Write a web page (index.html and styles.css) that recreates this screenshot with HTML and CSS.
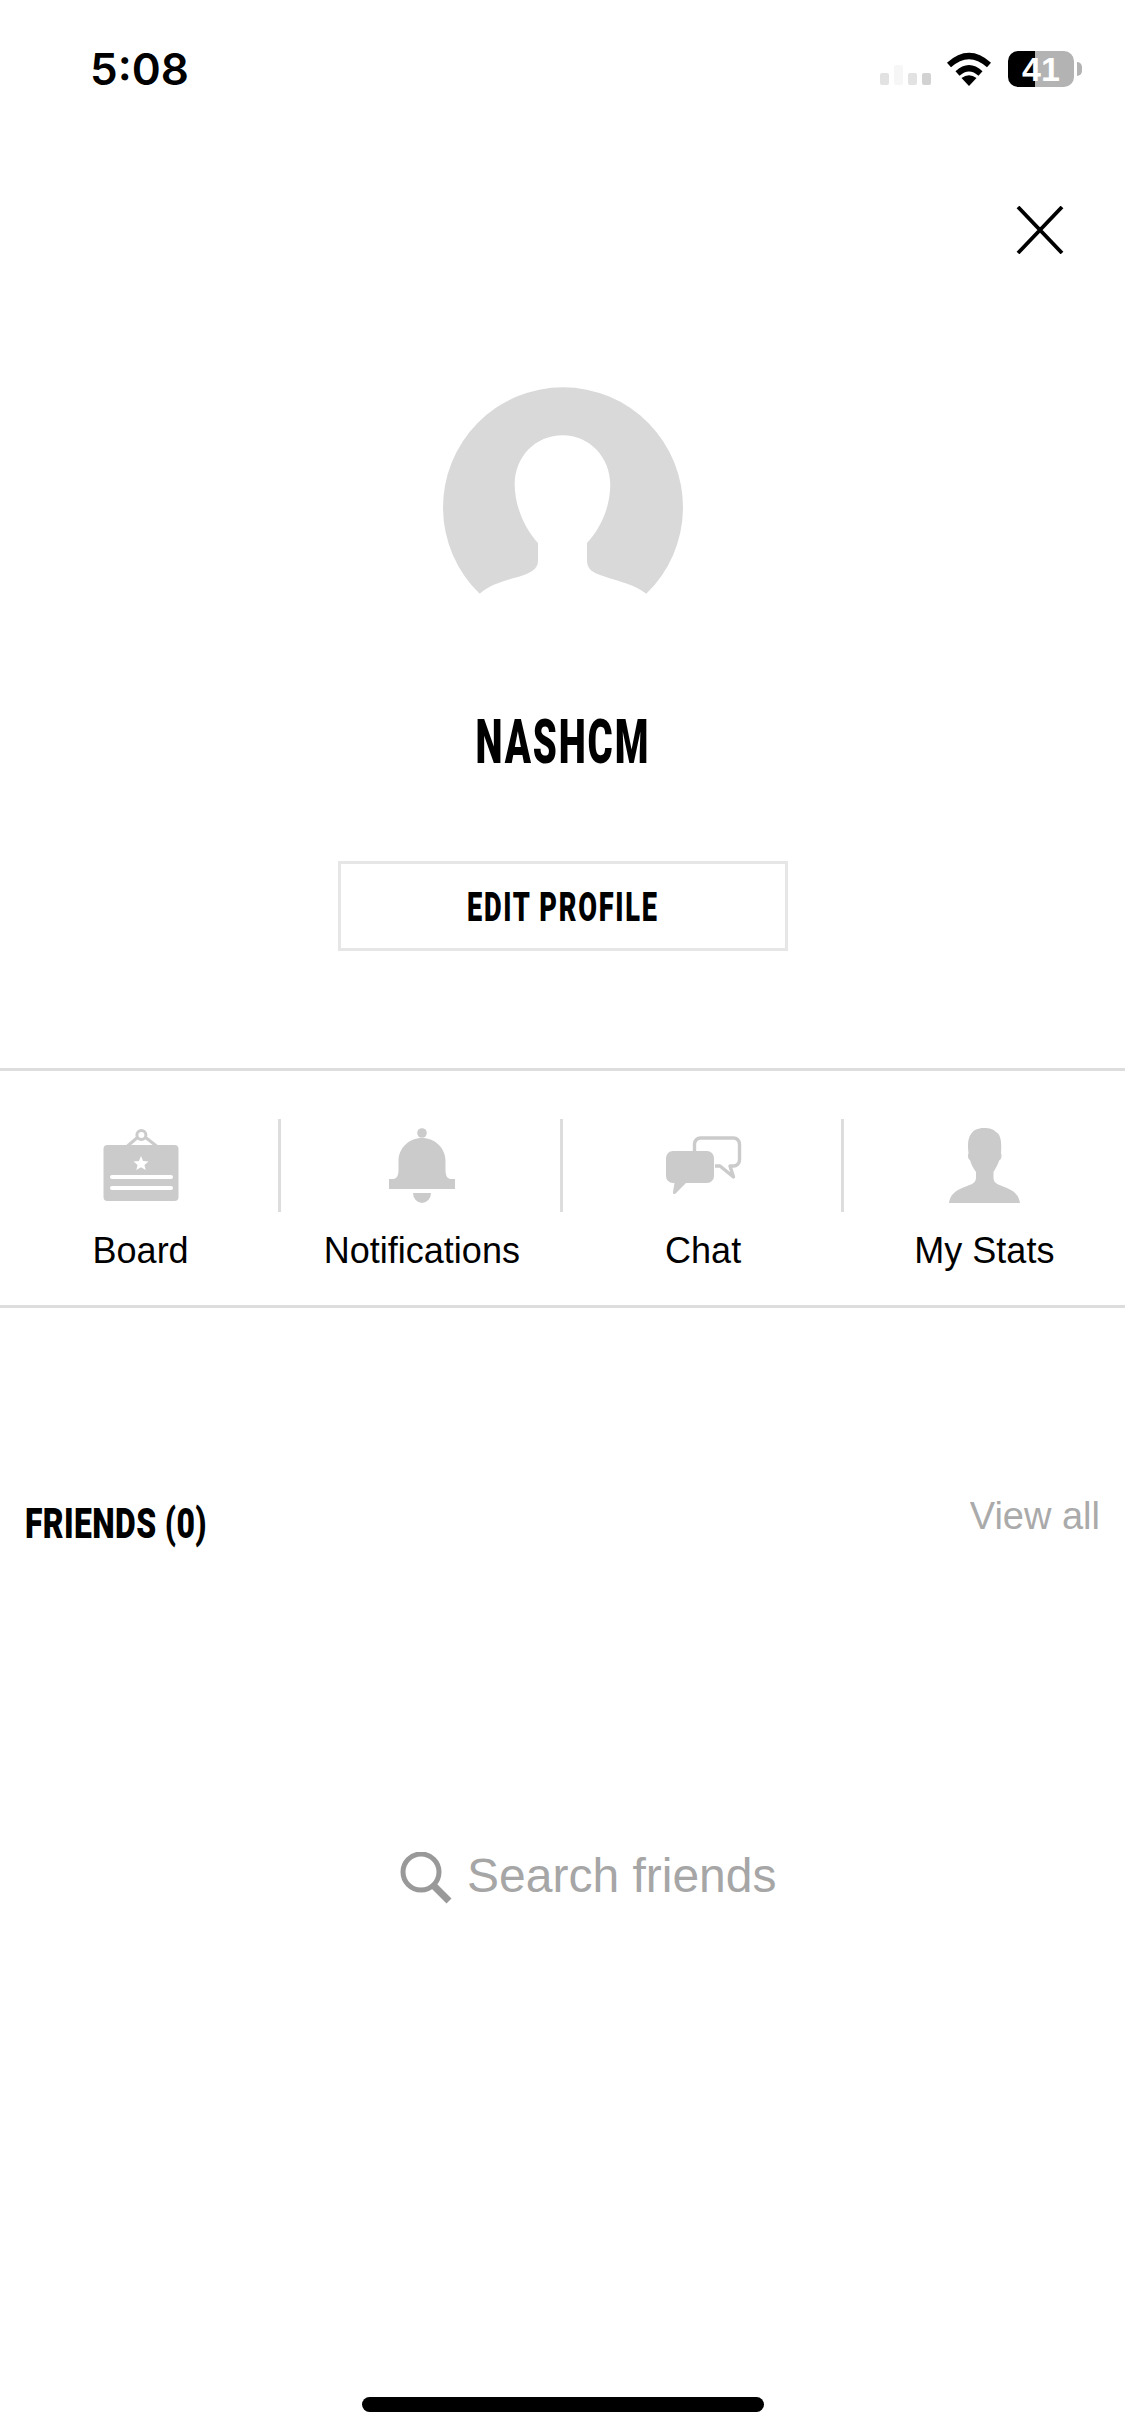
FILE: index.html
```html
<!DOCTYPE html>
<html lang="en">

<head>
    <meta charset="UTF-8">
    <title>Profile</title>
    <link rel="stylesheet" href="styles.css">
</head>

<body>
    <div class="page">
        <div class="status-bar">
            <span class="time">5:08</span>
            <div class="status-icons">
                <div class="signal">
                    <span class="bar"></span>
                    <span class="bar faint"></span>
                    <span class="bar"></span>
                    <span class="bar dark"></span>
                </div>
                <svg class="wifi" viewBox="0 0 46 34" width="46" height="34">
                    <path d="M3 13 Q23 -5 43 13" fill="none" stroke="#000" stroke-width="6" />
                    <path d="M11.5 21.5 Q23 11 34.5 21.5" fill="none" stroke="#000" stroke-width="6" />
                    <path d="M23 34 L15.5 26 Q23 20.5 30.5 26 Z" fill="#000" />
                </svg>
                <div class="battery">41</div>
                <span class="battery-nub"></span>
            </div>
        </div>

        <svg class="close" viewBox="0 0 48 48" width="48" height="48">
            <path d="M2 1 L46 47 M46 1 L2 47" stroke="#000" stroke-width="3.8" fill="none" />
        </svg>

        <svg class="avatar" viewBox="0 0 240 207" width="240" height="207">
            <path fill="#d9d9d9" d="M36.7 206.7 A120 120 0 1 1 203.3 206.7 C192 198 178 195 160 189 C150 186 144 182 144 174 V156 C158 141 167 120 167.3 98 C167.3 70 146 48.3 120 48.3 C92 48.3 71.7 70 71.7 98 C72 120 82 142 95 156 V174 C95 182 88 186 75 190 C60 194 46 198 36.7 206.7 Z" />
        </svg>

        <h1 class="name"><span>NASHCM</span></h1>
        <div class="edit-btn"><span>EDIT PROFILE</span></div>

        <div class="menu">
            <div class="menu-item">
                <div class="menu-icon">
                    <svg viewBox="0 0 80 76" width="80" height="76">
                        <path d="M26.5 18 L37 9 M44 9 L55.5 18" stroke="#cbcbcb" stroke-width="3" fill="none" />
                        <circle cx="40.4" cy="7" r="4.5" stroke="#cbcbcb" stroke-width="3" fill="none" />
                        <rect x="2.5" y="17" width="75" height="56" rx="4" fill="#cbcbcb" />
                        <path d="M40 28 L42.1 33 L47.5 33.4 L43.4 36.9 L44.7 42 L40 39.3 L35.3 42 L36.6 36.9 L32.5 33.4 L37.9 33 Z" fill="#fff" />
                        <path d="M11 49 H70 M11 60 H70" stroke="#fff" stroke-width="4" stroke-linecap="round" />
                    </svg>
                </div>
                <span class="menu-label">Board</span>
            </div>
            <div class="menu-item">
                <div class="menu-icon">
                    <svg viewBox="0 0 80 76" width="80" height="76">
                        <circle cx="40" cy="5" r="4.8" fill="#cbcbcb" />
                        <path d="M7 51 H11 C15 51 16.5 47 16.5 42 V33 C16.5 20 27 10 40 10 C53 10 63.5 20 63.5 33 V42 C63.5 47 65 51 69 51 H73 V61 H7 Z" fill="#cbcbcb" />
                        <path d="M31 65 H49 A9 10 0 0 1 31 65 Z" fill="#cbcbcb" />
                    </svg>
                </div>
                <span class="menu-label">Notifications</span>
            </div>
            <div class="menu-item">
                <div class="menu-icon">
                    <svg viewBox="0 0 80 76" width="80" height="76">
                        <path d="M31.5 23 V16 a6 6 0 0 1 6 -6 H70.5 a6 6 0 0 1 6 6 V32 a6 6 0 0 1 -6 6 H67 L70.5 49 L57 38 H52" fill="none" stroke="#cbcbcb" stroke-width="3.4" stroke-linejoin="round" />
                        <path d="M10 23 H44 a7 7 0 0 1 7 7 V48 a7 7 0 0 1 -7 7 H23 L12 66 Q9.5 66.5 10 64 L11.5 55 H10 a7 7 0 0 1 -7 -7 V30 a7 7 0 0 1 7 -7 Z" fill="#cbcbcb" />
                    </svg>
                </div>
                <span class="menu-label">Chat</span>
            </div>
            <div class="menu-item">
                <div class="menu-icon">
                    <svg viewBox="0 0 80 76" width="80" height="76">
                        <path d="M5 75 C6 67 11 63 18 60 C25 57 32 56 32 50 V44 C29 40 27 36 26 32 C24 31 23.5 28 24.5 25 C23 14 24 0 40 0 C46 0 49 1 52 4 C56 6 58 12 57 25 C58 28 57.5 31 55.5 32 C54 36 52 40 49.5 44 V50 C49.5 56 56 57 63 60 C70 63 75 67 76 75 Z" fill="#cbcbcb" />
                    </svg>
                </div>
                <span class="menu-label">My Stats</span>
            </div>
        </div>

        <div class="friends-head">
            <h2 class="friends-title">FRIENDS (0)</h2>
            <span class="view-all">View all</span>
        </div>

        <div class="search">
            <svg viewBox="0 0 52 52" width="52" height="52">
                <circle cx="21" cy="20" r="18" fill="none" stroke="#999" stroke-width="5" />
                <path d="M33 33 L49 49" stroke="#999" stroke-width="7" fill="none" />
            </svg>
            <span class="search-text">Search friends</span>
        </div>

        <div class="home-indicator"></div>
    </div>
</body>

</html>
```

FILE: styles.css
```css
* {
    box-sizing: border-box;
}

body {
    margin: 0;
    background: #fff;
    color: #000;
    font-family: 'Liberation Sans', Arial, sans-serif;
}

.page {
    width: 1125px;
    height: 2436px;
    display: flex;
    flex-direction: column;
    overflow: hidden;
}

.status-bar {
    height: 100px;
    padding: 46px 43px 0 90px;
    display: flex;
    justify-content: space-between;
    align-items: flex-start;
}

.time {
    font-family: Inter, sans-serif;
    font-weight: 600;
    font-size: 44px;
    line-height: 46px;
}

.status-icons {
    display: flex;
    align-items: flex-start;
    padding-top: 5px;
}

.signal {
    display: flex;
    align-items: flex-end;
    gap: 5px;
    height: 34px;
    margin-right: 15px;
}

.bar {
    width: 9px;
    height: 12px;
    border-radius: 2px;
    background: #e2e2e2;
}

.bar.faint {
    height: 20px;
    background: #f6f6f6;
}

.bar.dark {
    background: #d2d2d2;
}

.wifi {
    margin: 1px 16px 0 0;
}

.battery {
    width: 66px;
    height: 36px;
    border-radius: 10px;
    background: linear-gradient(to right, #000 27px, #b3b3b3 27px);
    color: #fff;
    font-weight: 700;
    font-size: 34px;
    line-height: 36px;
    text-align: center;
}

.battery-nub {
    width: 5px;
    height: 14px;
    margin: 11px 0 0 3px;
    border-radius: 0 5px 5px 0;
    background: #b3b3b3;
}

.close {
    align-self: flex-end;
    margin: 106px 61px 0 0;
}

.avatar {
    align-self: center;
    margin-top: 133px;
}

/* no condensed face is installed, so the headings are squeezed */
.name {
    margin: 118px 0 0;
    font-family: Roboto, 'Liberation Sans', sans-serif;
    font-size: 62px;
    font-weight: 900;
    line-height: 60px;
    text-align: center;
}

.name span {
    display: inline-block;
    transform: scaleX(0.62);
    letter-spacing: 3px;
}

.edit-btn {
    width: 450px;
    height: 90px;
    margin: 89px auto 0;
    padding-top: 2px;
    border: 3px solid #e6e6e6;
    display: flex;
    align-items: center;
    justify-content: center;
    font-family: Roboto, 'Liberation Sans', sans-serif;
    font-size: 40px;
    font-weight: 900;
}

.edit-btn span {
    transform: scaleX(0.68);
    letter-spacing: 2.5px;
    white-space: nowrap;
}

.menu {
    height: 240px;
    margin-top: 117px;
    padding-top: 48px;
    border-top: 3px solid #ddd;
    border-bottom: 3px solid #ddd;
    display: grid;
    grid-template-columns: repeat(4, 1fr);
}

.menu-item {
    display: flex;
    flex-direction: column;
    align-items: stretch;
}

.menu-icon {
    height: 93px;
    padding: 9px 0 0 3px;
    border-right: 3px solid #ddd;
    display: flex;
    justify-content: center;
}

.menu-item:last-child .menu-icon {
    border-right: none;
    padding-left: 0;
}

.menu-label {
    margin-top: 18px;
    font-size: 36px;
    line-height: 42px;
    text-align: center;
}

.friends-head {
    margin-top: 181px;
    padding: 0 25px;
    display: flex;
    justify-content: space-between;
    align-items: flex-start;
}

.friends-title {
    margin: 11px 0 0;
    font-family: Roboto, 'Liberation Sans', sans-serif;
    font-size: 42px;
    font-weight: 900;
    line-height: 48px;
    letter-spacing: 0.5px;
    transform: scaleX(0.76);
    transform-origin: left center;
    white-space: nowrap;
}

.view-all {
    margin-top: 3px;
    font-size: 38px;
    line-height: 48px;
    color: #aaa;
}

.search {
    margin-top: 304px;
    padding-left: 400px;
    display: flex;
    align-items: flex-start;
    gap: 15px;
}

.search-text {
    margin-top: -2px;
    font-size: 48px;
    line-height: 52px;
    color: #a6a6a6;
}

.home-indicator {
    width: 402px;
    height: 15px;
    margin: auto auto 24px;
    border-radius: 8px;
    background: #000;
}
```
